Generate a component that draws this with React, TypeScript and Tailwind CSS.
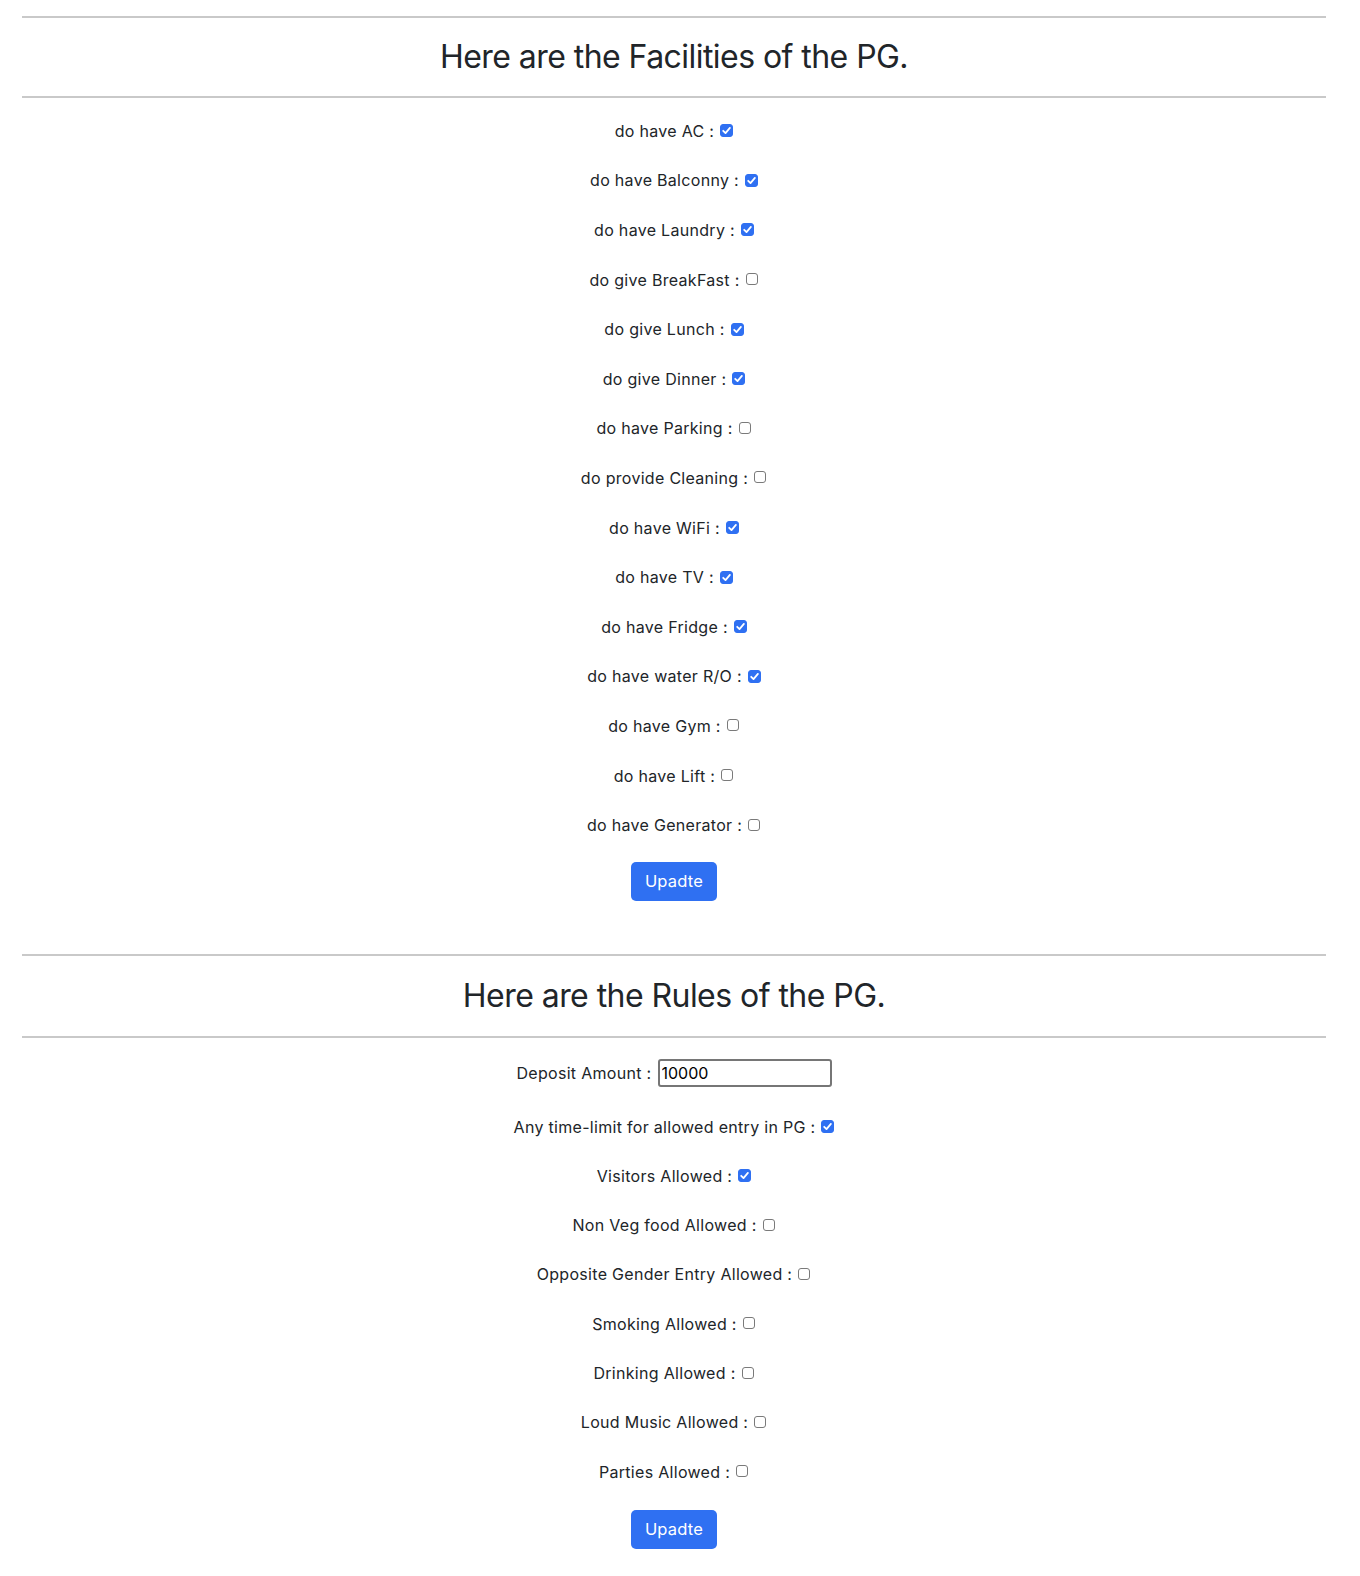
import React from "react";

type Item = { label: string; checked: boolean };

const facilities: Item[] = [
  { label: "do have AC", checked: true },
  { label: "do have Balconny", checked: true },
  { label: "do have Laundry", checked: true },
  { label: "do give BreakFast", checked: false },
  { label: "do give Lunch", checked: true },
  { label: "do give Dinner", checked: true },
  { label: "do have Parking", checked: false },
  { label: "do provide Cleaning", checked: false },
  { label: "do have WiFi", checked: true },
  { label: "do have TV", checked: true },
  { label: "do have Fridge", checked: true },
  { label: "do have water R/O", checked: true },
  { label: "do have Gym", checked: false },
  { label: "do have Lift", checked: false },
  { label: "do have Generator", checked: false },
];

const rules: Item[] = [
  { label: "Any time-limit for allowed entry in PG", checked: true },
  { label: "Visitors Allowed", checked: true },
  { label: "Non Veg food Allowed", checked: false },
  { label: "Opposite Gender Entry Allowed", checked: false },
  { label: "Smoking Allowed", checked: false },
  { label: "Drinking Allowed", checked: false },
  { label: "Loud Music Allowed", checked: false },
  { label: "Parties Allowed", checked: false },
];

function Check({ checked }: { checked: boolean }) {
  return (
    <span className="relative ml-[6px] inline-flex h-[13px] w-[13px]">
      <input
        type="checkbox"
        defaultChecked={checked}
        className={
          checked
            ? "m-0 h-[13px] w-[13px] appearance-none rounded-[3px] border border-[#2f70f2] bg-[#2f70f2]"
            : "m-0 h-[12px] w-[12px] appearance-none rounded-[3px] border border-[#7a7a7a] bg-white"
        }
      />
      {checked && (
        <svg
          viewBox="0 0 13 13"
          className="pointer-events-none absolute left-0 top-0 h-[13px] w-[13px]"
        >
          <path
            d="M3.2 6.8 L5.5 9.1 L9.9 3.9"
            fill="none"
            stroke="white"
            strokeWidth="1.8"
            strokeLinecap="round"
            strokeLinejoin="round"
          />
        </svg>
      )}
    </span>
  );
}

function Row({ item, h }: { item: Item; h: string }) {
  return (
    <div className={`flex items-center justify-center ${h}`}>
      <label className="flex items-center">
        <span>{item.label} :</span>
        <Check checked={item.checked} />
      </label>
    </div>
  );
}

function Rule() {
  return <hr className="m-0 h-0 border-0 border-t-2 border-[#c9c9c9]" />;
}

function Btn() {
  return (
    <div className="flex justify-center">
      <button
        type="button"
        className="h-[39px] w-[86px] rounded-[5px] bg-[#2f70f2] text-[16.5px] tracking-[0.2px] text-white"
      >
        Upadte
      </button>
    </div>
  );
}

export default function App() {
  return (
    <div
      className="w-[1348px] bg-white px-[22px] pb-[26px] pt-[16px] text-[16px] text-[#212529]"
      style={{ fontFamily: "Inter, 'Noto Sans', sans-serif" }}
    >
      <section>
        <Rule />
        <div className="flex h-[78px] items-center justify-center">
          <h2 className="m-0 text-[32px] font-normal leading-[38px] tracking-[-0.55px]">
            Here are the Facilities of the PG.
          </h2>
        </div>
        <Rule />
        <div className="mt-[8px] flex flex-col tracking-[0.3px]">
          {facilities.map((f) => (
            <Row key={f.label} item={f} h="h-[49.6px]" />
          ))}
        </div>
        <div className="mt-[12px]">
          <Btn />
        </div>
      </section>
      <section className="mt-[53px]">
        <Rule />
        <div className="flex h-[80px] items-center justify-center">
          <h2 className="m-0 text-[32px] font-normal leading-[38px] tracking-[-0.55px]">
            Here are the Rules of the PG.
          </h2>
        </div>
        <Rule />
        <div className="mt-[21px] flex h-[28px] items-center justify-center tracking-[0.3px]">
          <label className="flex items-center">
            <span>Deposit Amount :</span>
            <input
              type="text"
              defaultValue="10000"
              className="ml-[6px] h-[28px] w-[174px] rounded-[3px] border-2 border-[#767676] px-[2px] text-[16px] tracking-normal text-black outline-none"
            />
          </label>
        </div>
        <div className="mt-[15px] flex flex-col tracking-[0.3px]">
          {rules.map((r) => (
            <Row key={r.label} item={r} h="h-[49.3px]" />
          ))}
        </div>
        <div className="mt-[13.6px]">
          <Btn />
        </div>
      </section>
    </div>
  );
}
